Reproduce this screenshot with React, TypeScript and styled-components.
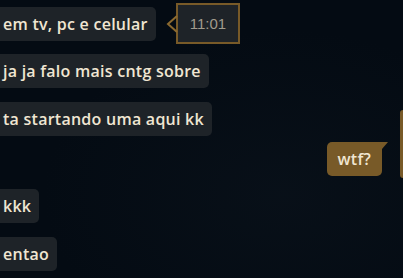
import styled, { createGlobalStyle } from 'styled-components';

const GlobalStyle = createGlobalStyle`
  html, body {
    margin: 0;
    padding: 0;
    background: #040b13;
  }
  body {
    font-family: 'Open Sans', 'Liberation Sans', sans-serif;
  }
`;

type Message = { text: string; mine?: boolean; time?: string; gap: number };

const messages: Message[] = [
  { text: 'em tv, pc e celular', time: '11:01', gap: 0 },
  { text: 'ja ja falo mais cntg sobre', gap: 13 },
  { text: 'ta startando uma aqui kk', gap: 14 },
  { text: 'wtf?', mine: true, gap: 6 },
  { text: 'kkk', gap: 13 },
  { text: 'entao', gap: 14 },
];

const App: React.FC = () => {
  return (
    <>
      <GlobalStyle />
      <Chat>
        {messages.map((m, i) => (
          <Row key={i} $mine={m.mine} $gap={m.gap}>
            <Bubble $mine={m.mine}>
              {m.text}
              {m.mine && <Tail />}
            </Bubble>
            {m.time && (
              <Tooltip>
                <Arrow viewBox="0 0 12 18">
                  <path d="M11 1 L2 9 L11 17" fill="none" stroke="#8c6a30" strokeWidth="2" />
                </Arrow>
                {m.time}
              </Tooltip>
            )}
          </Row>
        ))}
        <EdgeBar />
      </Chat>
    </>
  );
};

export default App;

const Chat = styled.div`
  position: relative;
  width: 403px;
  height: 278px;
  overflow: hidden;
  box-sizing: border-box;
  padding-top: 7px;
  display: flex;
  flex-direction: column;
  background:
    radial-gradient(ellipse at 70% 70%, rgba(20, 30, 40, 0.25), transparent 60%),
    #040b13;
`;

const Row = styled.div<{ $mine?: boolean; $gap: number }>`
  position: relative;
  display: flex;
  justify-content: ${(p) => (p.$mine ? 'flex-end' : 'flex-start')};
  margin-top: ${(p) => p.$gap}px;
  padding-right: ${(p) => (p.$mine ? '21px' : '0')};
`;

const Bubble = styled.div<{ $mine?: boolean }>`
  position: relative;
  height: 34px;
  display: flex;
  align-items: center;
  box-sizing: border-box;
  margin-left: ${(p) => (p.$mine ? '0' : '-8px')};
  padding: ${(p) => (p.$mine ? '0 11px' : '0 8px 0 11px')};
  border-radius: 5px;
  border-top-right-radius: ${(p) => (p.$mine ? '0' : '5px')};
  background: ${(p) => (p.$mine ? '#785a28' : '#1e2328')};
  color: #f0e6d2;
  font-size: 16px;
  font-weight: 600;
  letter-spacing: 0.25px;
  white-space: nowrap;
`;

const Tail = styled.span`
  position: absolute;
  top: 0;
  right: -6px;
  width: 0;
  height: 0;
  border-top: 7px solid #785a28;
  border-right: 6px solid transparent;
`;

const Tooltip = styled.div`
  position: absolute;
  left: 176px;
  top: -4px;
  width: 64px;
  height: 41px;
  box-sizing: border-box;
  border: 2px solid #785a28;
  background: #1e2328;
  color: #a09b8c;
  font-family: 'Liberation Sans', Arial, sans-serif;
  font-size: 15px;
  display: flex;
  align-items: center;
  justify-content: center;
`;

const Arrow = styled.svg`
  position: absolute;
  left: -12px;
  top: 10px;
  width: 12px;
  height: 18px;
`;

const EdgeBar = styled.div`
  position: absolute;
  right: 0;
  top: 110px;
  width: 3px;
  height: 68px;
  border-radius: 3px 0 0 3px;
  background: #785a28;
`;
